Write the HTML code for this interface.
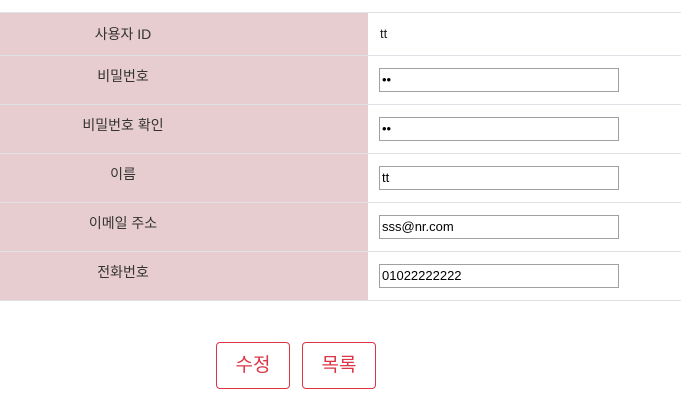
<!DOCTYPE html>
<html><head><meta charset="utf-8"><style>
body{margin:0;width:681px;height:404px;background:#fff;font-family:"Liberation Sans","Noto Sans CJK KR",sans-serif;position:relative;overflow:hidden}
.l{position:absolute;left:0;height:1px;width:681px;background:#dee2e6}
.p{position:absolute;left:0;width:368px;background:#e8cdd0}
.c{position:absolute;left:0;width:246px;color:#333;font-size:14px;text-align:center}
.v{position:absolute;left:380px;font-size:13px;color:#222}
.i{position:absolute;left:379px;width:236px;height:22px;border:1px solid #a0a0a0;background:#fff;font-size:13px;line-height:22px;padding-left:2px;box-sizing:content-box;color:#000}
.b{position:absolute;top:342px;width:72px;height:45px;border:1px solid #dc3545;border-radius:4px;color:#dc3545;font-size:19px;text-align:center;line-height:45px}
</style></head><body>
<div class="p" style="top:13px;height:42px"></div>
<div class="p" style="top:56px;height:48px"></div>
<div class="p" style="top:105px;height:48px"></div>
<div class="p" style="top:154px;height:48px"></div>
<div class="p" style="top:203px;height:48px"></div>
<div class="p" style="top:252px;height:48px"></div>
<div class="l" style="top:12px"></div>
<div class="c" style="top:13px;height:42px;line-height:42px">사용자 ID</div>
<div class="v" style="top:26px">tt</div>
<div class="l" style="top:55px"></div>
<div class="c" style="top:56px;height:48px;line-height:40px">비밀번호</div>
<div class="i" style="top:68px">••</div>
<div class="l" style="top:104px"></div>
<div class="c" style="top:105px;height:48px;line-height:40px">비밀번호 확인</div>
<div class="i" style="top:117px">••</div>
<div class="l" style="top:153px"></div>
<div class="c" style="top:154px;height:48px;line-height:40px">이름</div>
<div class="i" style="top:166px">tt</div>
<div class="l" style="top:202px"></div>
<div class="c" style="top:203px;height:48px;line-height:40px">이메일 주소</div>
<div class="i" style="top:215px">sss@nr.com</div>
<div class="l" style="top:251px"></div>
<div class="c" style="top:252px;height:48px;line-height:40px">전화번호</div>
<div class="i" style="top:264px">01022222222</div>
<div class="l" style="top:300px"></div>
<div class="b" style="left:216px">수정</div>
<div class="b" style="left:302px">목록</div>
</body></html>
